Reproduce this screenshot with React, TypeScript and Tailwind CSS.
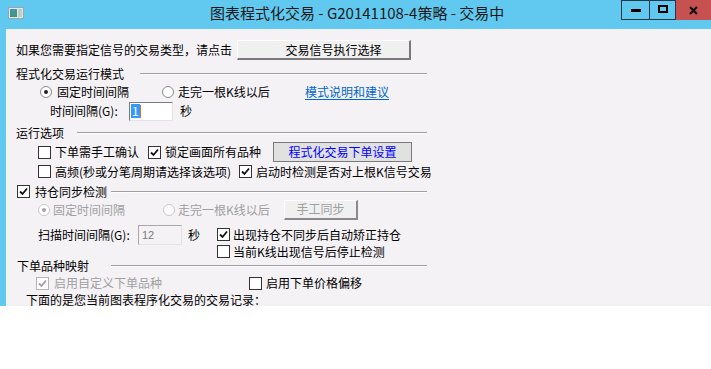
import React from 'react';

const FONT = "[font-family:'Noto_Sans_CJK_SC','Liberation_Sans',sans-serif]";

function Check({ checked, disabled }: { checked?: boolean; disabled?: boolean }) {
  return (
    <span
      className={`w-[13px] h-[13px] shrink-0 border bg-white flex items-center justify-center ${
        disabled ? 'border-[#b5b5b5] bg-[#f4f4f4]' : 'border-[#333]'
      }`}
    >
      {checked && (
        <svg width="9" height="9" viewBox="0 0 9 9">
          <path d="M1 4.5 L3.5 7 L8 1.5" fill="none" stroke={disabled ? '#a0a0a0' : '#111'} strokeWidth="1.8" />
        </svg>
      )}
    </span>
  );
}

function Radio({ checked, disabled }: { checked?: boolean; disabled?: boolean }) {
  return (
    <span
      className={`w-[12px] h-[12px] shrink-0 rounded-full border bg-white flex items-center justify-center ${
        disabled ? 'border-[#c8c8c8]' : 'border-[#8a8a8a]'
      }`}
    >
      {checked && <span className={`w-[4px] h-[4px] rounded-full ${disabled ? 'bg-[#a8a8a8]' : 'bg-[#222]'}`} />}
    </span>
  );
}

function Line({ width }: { width: number }) {
  return <span className="h-[2px] border-t border-[#a0a0a0] border-b border-b-white" style={{ width }} />;
}

export default function App() {
  return (
    <div className={`w-[711px] h-[369px] bg-white overflow-hidden text-[12px] leading-[16px] text-black ${FONT}`}>
      <div className="h-[306px] bg-[#61c8ef] flex flex-col">
        {/* title bar */}
        <div className="h-[29px] flex items-start shrink-0">
          <div className="ml-[8px] mt-[7px] w-[16px] h-[12px] border border-[#9aa4ae] bg-[#dfe6ec] flex p-[1px] gap-[1px]">
            <span className="w-[7px] bg-gradient-to-b from-[#4d8fb8] to-[#3a9a6a]" />
            <span className="w-[4px] bg-[#b8d0c0]" />
          </div>
          <div className="ml-[186px] mt-[4px] text-[15px] leading-[18px] text-[#1a1a1a] whitespace-nowrap">
            图表程式化交易 - G20141108-4策略 - 交易中
          </div>
          <div className="flex-1" />
          <div className="flex h-[20px] mr-0">
            <div className="w-[29px] h-[20px] border border-[#24384a] flex items-end justify-center pb-[7px]">
              <span className="w-[10px] h-[3px] bg-black" />
            </div>
            <div className="w-[26px] h-[20px] border border-l-0 border-[#24384a] flex items-start justify-center pt-[4px]">
              <span className="w-[10px] h-[8px] border-2 border-black" />
            </div>
            <div className="w-[35px] h-[20px] bg-[#c75050] flex items-center justify-center">
              <svg width="9" height="9" viewBox="0 0 9 9">
                <path d="M1 1 L8 8 M8 1 L1 8" stroke="#111" strokeWidth="2.2" />
              </svg>
            </div>
          </div>
        </div>

        {/* client area */}
        <div className="ml-[6px] flex-1 bg-[#f5f2f6] overflow-hidden flex flex-col pt-[11px] whitespace-nowrap">
          {/* row 1 */}
          <div className="h-[20px] flex items-center pl-[10px]">
            <span className="w-[221px]">如果您需要指定信号的交易类型，请点击</span>
            <button className="w-[174px] h-[20px] bg-[#f0f0f0] border border-white border-r-[#7a7a7a] border-b-[#7a7a7a] border-r-2 border-b-2 text-[12px] leading-[16px] pl-[20px]">
              交易信号执行选择
            </button>
          </div>

          {/* group 1 */}
          <div className="mt-[6px] h-[16px] flex items-center pl-[10px]">
            <span className="w-[124px]">程式化交易运行模式</span>
            <Line width={287} />
          </div>
          <div className="h-[20px] flex items-center pl-[34px]">
            <span className="w-[122px] flex items-center gap-[5px]">
              <Radio checked />
              固定时间间隔
            </span>
            <span className="w-[143px] flex items-center gap-[4px]">
              <Radio />
              走完一根K线以后
            </span>
            <a className="text-[#0066cc] underline underline-offset-2">模式说明和建议</a>
          </div>
          <div className="h-[20px] flex items-center pl-[44px]">
            <span className="w-[79px]">时间间隔(G):</span>
            <span className="w-[44px] h-[19px] bg-white border border-[#7a7a7a] border-r-[#e3e3e3] border-b-[#e3e3e3] flex items-center pl-[1px]">
              <span className="bg-[#3399ff] text-white px-[1px] leading-[14px]">1</span>
              <span className="w-[1px] h-[13px] bg-[#e07020]" />
            </span>
            <span className="ml-[7px]">秒</span>
          </div>

          {/* group 2 */}
          <div className="mt-[4px] h-[16px] flex items-center pl-[10px]">
            <span className="w-[61px]">运行选项</span>
            <Line width={350} />
          </div>
          <div className="mt-[1px] h-[20px] flex items-center pl-[32px]">
            <span className="w-[110px] flex items-center gap-[4px]">
              <Check />
              下单需手工确认
            </span>
            <span className="w-[125px] flex items-center gap-[4px]">
              <Check checked />
              锁定画面所有品种
            </span>
            <button className="w-[139px] h-[20px] bg-[#e1e1e1] border border-[#7a7a7a] text-[#0000ff] text-[12px] leading-[16px]">
              程式化交易下单设置
            </button>
          </div>
          <div className="h-[20px] flex items-center pl-[32px]">
            <span className="w-[201px] flex items-center gap-[4px]">
              <Check />
              高频(秒或分笔周期请选择该选项)
            </span>
            <span className="flex items-center gap-[4px]">
              <Check checked />
              启动时检测是否对上根K信号交易
            </span>
          </div>

          {/* group 3 */}
          <div className="mt-[2px] h-[16px] flex items-center pl-[11px]">
            <span className="w-[94px] flex items-center gap-[5px]">
              <Check checked />
              持仓同步检测
            </span>
            <Line width={316} />
          </div>
          <div className="h-[20px] flex items-center pl-[32px] text-[#a0a0a0]">
            <span className="w-[125px] flex items-center gap-[3px]">
              <Radio checked disabled />
              固定时间间隔
            </span>
            <span className="w-[121px] flex items-center gap-[3px]">
              <Radio disabled />
              走完一根K线以后
            </span>
            <button className="w-[74px] h-[20px] bg-[#f0f0f0] border border-white border-r-2 border-b-2 border-r-[#8a8a8a] border-b-[#8a8a8a] text-[#a0a0a0] text-[12px] leading-[16px]">
              手工同步
            </button>
          </div>
          <div className="mt-[5px] h-[20px] flex items-center pl-[32px]">
            <span className="w-[100px]">扫描时间间隔(G):</span>
            <span className="w-[44px] h-[20px] bg-[#f5f2f6] border border-[#a8a8a8] border-r-[#e3e3e3] border-b-[#e3e3e3] flex items-center pl-[3px] text-[#7a7a7a] [font-family:'Liberation_Sans',sans-serif] text-[11px]">
              12
            </span>
            <span className="w-[35px] pl-[6px]">秒</span>
            <span className="flex items-center gap-[3px]">
              <Check checked />
              出现持仓不同步后自动矫正持仓
            </span>
          </div>
          <div className="h-[14px] flex items-center pl-[211px]">
            <span className="flex items-center gap-[3px]">
              <Check />
              当前K线出现信号后停止检测
            </span>
          </div>

          {/* group 4 */}
          <div className="h-[14px] flex items-center pl-[11px]">
            <span className="w-[94px]">下单品种映射</span>
            <Line width={316} />
          </div>
          <div className="h-[22px] flex items-center pl-[30px]">
            <span className="w-[213px] flex items-center gap-[5px] text-[#a0a0a0]">
              <Check checked disabled />
              启用自定义下单品种
            </span>
            <span className="flex items-center gap-[4px]">
              <Check />
              启用下单价格偏移
            </span>
          </div>
          <div className="h-[12px] flex items-center pl-[20px]">下面的是您当前图表程序化交易的交易记录：</div>
        </div>
      </div>
    </div>
  );
}
